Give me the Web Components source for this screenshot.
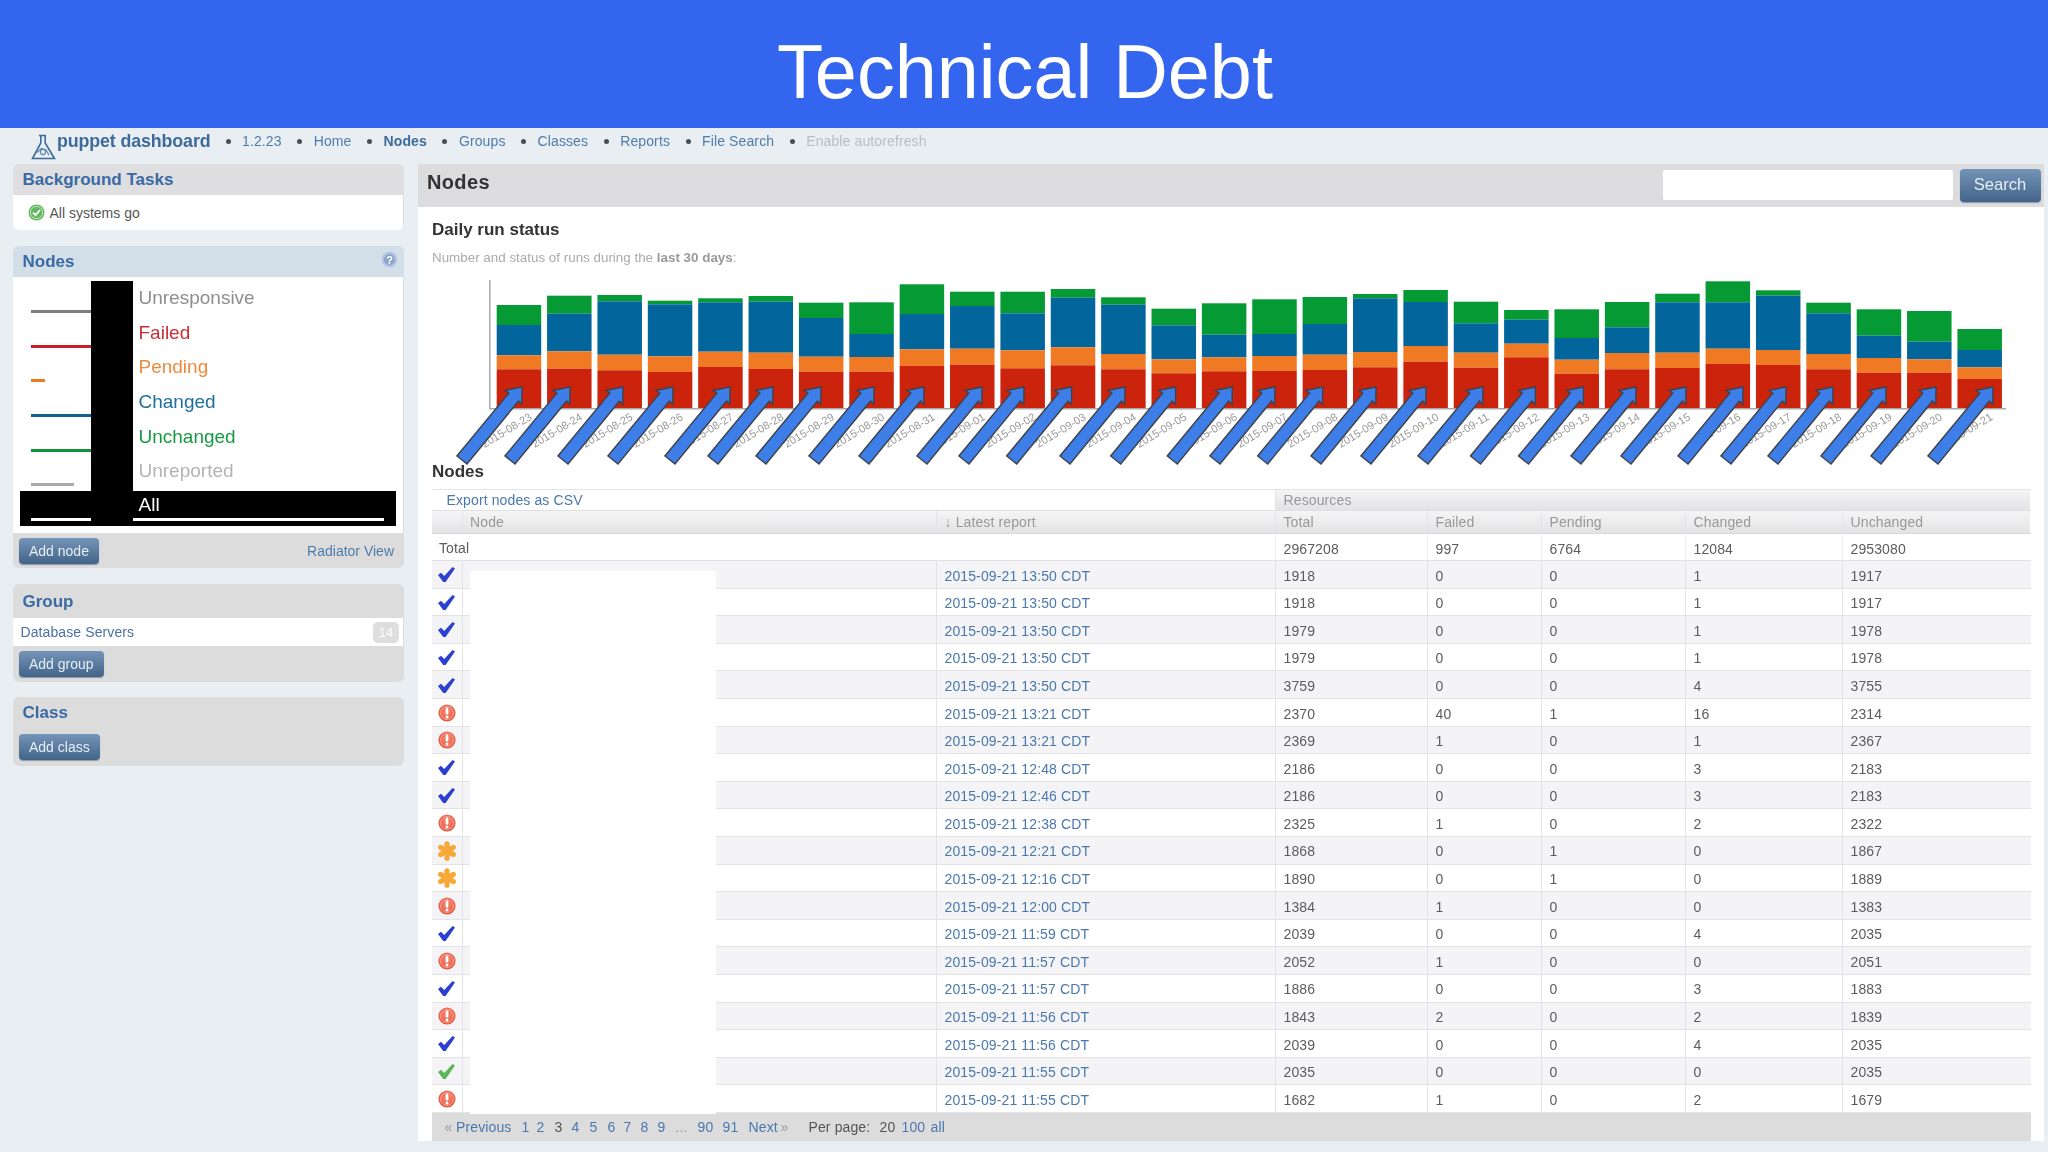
<!DOCTYPE html>
<html lang="en">
<head>
<meta charset="utf-8">
<title>Technical Debt</title>
<style>
html,body{margin:0;padding:0;width:2048px;height:1152px;overflow:hidden;background:#e8eef1;font-family:"Liberation Sans",Arial,sans-serif;}
</style>
</head>
<body>
<slide-title>Technical Debt</slide-title>
<pd-app></pd-app>
<script>
function def(name, css, html, init){
  customElements.define(name, class extends HTMLElement{
    constructor(){super();const r=this.attachShadow({mode:'open'});
      r.innerHTML='<style>'+css+'</style>'+(typeof html==='function'?html(this):html);}
    connectedCallback(){if(init&&!this._i){this._i=1;init(this,this.shadowRoot);}}
  });
}

def('slide-title',`:host{display:flex;align-items:center;justify-content:center;height:128px;background:#3465ee;color:#fff;font-size:75.6px;font-family:"Liberation Sans",Arial,sans-serif;padding-left:2px;box-sizing:border-box;padding-top:16px}`,`<slot></slot>`);

def('status-icon',`:host{display:inline-flex;width:20px;height:20px;align-items:center;justify-content:center}svg{display:block}`,'',(h,r)=>{
  const k=h.getAttribute('kind');let s='';
  const chk=c=>`<svg width="19" height="17" viewBox="0 0 19 16"><path d="M1 8.4 L4 6.2 L7.2 9.4 L15.6 .6 L18 2 L8.6 15.4 L6.2 15.4 Z" fill="${c}"/></svg>`;
  if(k==='ok')s=chk('#2b40cf');
  if(k==='unchanged')s=chk('#5cb557');
  if(k==='fail')s=`<svg width="18" height="18" viewBox="0 0 18 18"><defs><radialGradient id="f" cx=".5" cy=".4" r=".6"><stop offset="0" stop-color="#f58b74"/><stop offset="1" stop-color="#e4553f"/></radialGradient></defs><circle cx="9" cy="9" r="8.6" fill="url(#f)"/><circle cx="9" cy="9" r="6.4" fill="none" stroke="#f6b3a3" stroke-width=".8"/><rect x="7.7" y="3.6" width="2.6" height="7" rx="1.2" fill="#fff"/><circle cx="9" cy="13" r="1.5" fill="#fff"/></svg>`;
  if(k==='pending')s=`<svg width="20" height="20" viewBox="0 0 20 20"><g stroke="#f7a837" stroke-width="5.2" stroke-linecap="round"><path d="M10 2.8V17.2"/><path d="M3.7 6.4L16.3 13.6"/><path d="M16.3 6.4L3.7 13.6"/></g></svg>`;
  r.innerHTML+=s;
});

def('pd-button',`:host{display:inline-flex;align-items:center;justify-content:center;height:var(--h,26px);padding:0 var(--px,10.5px);border-radius:4px;background:linear-gradient(#7495b8,#426488);color:#e6edf4;font-size:var(--fs,14px);box-shadow:0 1px 1px #8a97a5;box-sizing:border-box}`,`<slot></slot>`);

def('pd-nav',`:host{display:flex;align-items:center;height:36px;padding-left:31px;font-size:14px;color:#4f7cab;box-sizing:border-box;letter-spacing:.12px}
svg{flex:none;width:25px;height:26px;margin-top:1px}
.brand{font-weight:700;font-size:17.8px;color:#3f6a9c;margin-left:1px;width:153px;white-space:nowrap;letter-spacing:-.1px;margin-top:-9px}
span.i{display:flex;align-items:center;margin-top:-10px}
span.i::before{content:"";width:5px;height:5px;border-radius:50%;background:#444f5a;margin:0 11.5px 0 15.5px;flex:none}
.b{font-weight:700;color:#3f6a9c}.off{color:#b7bec3}`,
`<svg viewBox="0 0 25 26" fill="none" stroke="#3f6a9c" stroke-width="1.6"><path d="M8 1.5H15M9.8 1.5V9L1.5 24.5H23.5L14.2 9V1.5"/><path d="M6 18.5L10.5 14.5 15 16 18 21" stroke-width="1.2" stroke="#5d86b0"/><circle cx="12" cy="18" r="2.6" stroke-width="1.1" stroke="#5d86b0"/></svg>
<span class="brand">puppet dashboard</span>
<span class="i">1.2.23</span><span class="i">Home</span><span class="i b">Nodes</span><span class="i">Groups</span><span class="i">Classes</span><span class="i">Reports</span><span class="i">File Search</span><span class="i off">Enable autorefresh</span>`);

def('pd-panel',`:host{display:block;background:#dcdcdc;border-radius:6px;width:391.5px;overflow:hidden}
.h{display:flex;align-items:center;justify-content:space-between;height:var(--head,31px);padding:var(--hp,0) 7px 0 10px;font-size:17px;font-weight:700;color:#3a6aa3;box-sizing:border-box}
:host([tone=blue]) .h{background:#d3dfe8}
:host([tone=soft]) .h{background:#dfdfe1}`,
h=>`<div class="h"><span>${h.getAttribute('heading')}</span><slot name="tool"></slot></div><slot></slot>`);

def('panel-body',`:host{display:flex;align-items:center;background:#fff;height:var(--bh,35px);box-sizing:border-box;font-size:14px;color:#555;padding:0 5px 0 8px;margin-right:1px;}`,`<slot></slot>`);
def('panel-foot',`:host{display:flex;align-items:flex-start;justify-content:space-between;padding:5px 10px 0 6px;height:var(--fh,35px);box-sizing:border-box;font-size:14px;line-height:26px;color:#4f7cab}`,`<slot></slot>`);

def('help-icon',`:host{display:flex;width:15px;height:15px;border-radius:50%;background:#8ba6cc;color:#fff;font-size:11px;font-weight:700;align-items:center;justify-content:center;margin-top:-4px;box-shadow:inset 0 0 0 2px #b3c6df}`,`?`);
def('go-icon',`:host{display:block;width:17px;height:17px;margin:0 5px 0 7px}`,`<svg width="17" height="17" viewBox="0 0 17 17"><circle cx="8.5" cy="8.5" r="8" fill="#62b862"/><circle cx="8.5" cy="8.5" r="6.2" fill="none" stroke="#c6e6c2" stroke-width="1"/><path d="M5 8.6L7.6 11.2 12 6" fill="none" stroke="#fff" stroke-width="1.9"/></svg>`);

def('legend-row',`:host{display:block;position:relative;height:34.7px;padding-left:11px;box-sizing:border-box;font-size:19px;color:var(--c)}
.t{display:flex;align-items:center;height:34px;margin-left:107px;padding-left:.5px}
.l{position:absolute;left:11px;top:29px;height:3px;background:var(--l,var(--c));width:var(--w)}
:host([all]){background:#000;height:35px;margin-top:2px;--c:#fff}
:host([all]) .t{height:28px}
:host([all]) .l{top:26.5px}`,`<div class="t"><slot></slot></div><div class="l"></div>`);

def('pd-legend',`:host{display:block;position:relative;padding:4px 7px 7px 7.5px;background:#fff;margin-right:1px;height:256px;box-sizing:border-box}
.mask{position:absolute;left:78px;top:4px;width:42px;height:245px;background:#000}`,`<slot></slot><div class="mask"></div>`);

def('pd-chart',`:host{display:block;height:192px}svg{display:block;overflow:visible}text{font-family:"Liberation Sans",Arial,sans-serif}`,'',(h,r)=>{
  const d=[[305,325,355.3,369.3],[295.7,313.7,351.3,368.7],[295,301.3,354.7,370.3],[300.7,304.3,356.3,372],[298.3,302.3,351.7,367],[296,301.7,352.7,369],[302.7,318,356.7,371.7],[302.3,334,357,371.7],[284.3,314,349.3,366],[291.7,306,348.7,364.7],[291.7,313.3,350.3,368.3],[289,297.7,347.3,365.3],[297.3,304.7,354,369.3],[308.7,325.3,359.3,373.3],[303.3,334.7,357.3,371.3],[299.3,334,356,371],[297,324,354.7,370],[294,298.3,352,367.3],[290,302,346,361.7],[301.7,323.3,352.7,367.7],[310,319.7,343.7,357.3],[309.3,338,359.7,373.7],[302,327.3,353,369.3],[293.7,302.3,352.7,368],[281.3,302.3,348.7,364],[290.3,295.7,350,365],[302.7,313.3,354,369.3],[309.3,335.7,358,372.7],[311,341.7,359.3,372.7],[329,350,367.3,379]];
  const tips=[522,570,623,673,730,773,821,874,924,982,1024,1071.7,1125,1175.7,1232.3,1275,1322.7,1376,1426,1483,1535.5,1583.5,1636,1686,1743,1786,1833,1886,1936,1993];
  const days=[];for(let i=23;i<=31;i++)days.push('2015-08-'+i);for(let i=1;i<=21;i++)days.push('2015-09-'+String(i).padStart(2,'0'));
  const col=['#069a35','#02659c','#f07a24','#cc230c'],B=408.3;let s='';
  d.forEach((b,i)=>{const x=496.7+i*50.37;
    b.forEach((y,j)=>{const n=j<3?b[j+1]:B;s+=`<rect x="${x.toFixed(2)}" y="${y}" width="44.5" height="${(n-y).toFixed(2)}" fill="${col[j]}"/>`;});
  });
  s+=`<path d="M489.8 280V408.8H2006" fill="none" stroke="#a9a9a9" stroke-width="1.5"/>`;
  d.forEach((b,i)=>{const x=496.7+i*50.37+22+14;
    s+=`<text x="${x.toFixed(1)}" y="419" font-size="11" fill="#999" text-anchor="end" transform="rotate(-31 ${x.toFixed(1)} 419)">${days[i]}</text>`;});
  tips.forEach(t=>{
    s+=`<polygon transform="translate(${t} 387)" points="0,0 -.2,17.4 -3.6,14.2 -55,77 -65,69 -13.2,6.2 -17,3.4" fill="#3d7ee9" stroke="#40444c" stroke-width="1.5" stroke-linejoin="miter"/>`;});
  r.innerHTML+=`<svg width="1600" height="192" viewBox="432 270 1600 192">${s}</svg>`;
});

const ROWS=`ok,13:50,1918,0,0,1,1917
ok,13:50,1918,0,0,1,1917
ok,13:50,1979,0,0,1,1978,m
ok,13:50,1979,0,0,1,1978,m
ok,13:50,3759,0,0,4,3755
fail,13:21,2370,40,1,16,2314
fail,13:21,2369,1,0,1,2367
ok,12:48,2186,0,0,3,2183
ok,12:46,2186,0,0,3,2183
fail,12:38,2325,1,0,2,2322,m
pending,12:21,1868,0,1,0,1867
pending,12:16,1890,0,1,0,1889
fail,12:00,1384,1,0,0,1383
ok,11:59,2039,0,0,4,2035
fail,11:57,2052,1,0,0,2051,m
ok,11:57,1886,0,0,3,1883
fail,11:56,1843,2,0,2,1839
ok,11:56,2039,0,0,4,2035,m
unchanged,11:55,2035,0,0,0,2035,m
fail,11:55,1682,1,0,2,1679,m`.split('\n').map(l=>l.split(','));

def('pd-table',`:host{display:block;position:relative;font-size:14px;color:#5c5c5c;letter-spacing:.12px;border-top:1px solid #e4e4e6;box-sizing:border-box;height:652px}
.r{display:grid;grid-template-columns:29.5px 474.5px 339px 152px 114px 144px 157px 188px;box-sizing:border-box}
.r>div{display:flex;align-items:center;padding-left:7.5px;border-left:1px solid #e3e3ea;box-sizing:border-box;min-width:0;white-space:nowrap}
.r>div:first-child{border-left:0;padding:0;justify-content:center}
.top{height:21px;grid-template-columns:843px 755px;border-bottom:1px solid #e0e0e2}
.top>div:first-child{justify-content:flex-start;padding-left:14.5px}
.top a{color:#4a78ad}
.head{height:23px;border-bottom:1px solid #dadadc}
.head>div,.g{background:linear-gradient(#f5f5f6,#e3e3e5);color:#999}
.top>div.g{color:#999}
.total{height:27px;border-bottom:1.5px solid #e2e2e5}
.total>div{border-left-color:#eee;padding-top:3px}
.total>div:first-child{justify-content:flex-start;padding:2px 0 0 7px;grid-column:span 3}
.row{height:27.6px;border-bottom:1.5px solid #e3e3e6;background:#fff}
.row:nth-child(odd){background:#f4f4f6}
.row a{color:#4a78ad}
.row>div{position:relative;padding-top:2.5px}
.row>div:first-child{padding-top:1px}
.m{position:absolute;left:7px;top:11px;width:1.5px;height:6px;background:#555}
.mask{position:absolute;left:37.5px;top:81px;width:246px;height:543px;background:#fff}
.pg{height:28px;background:#dcdcdc;display:flex;align-items:center;color:#555;padding-left:12.5px;font-size:14px;position:relative}
.pg span{position:absolute;top:50%;transform:translateY(-50%);white-space:nowrap}
.pg .l{color:#4a78ad}.pg .q{color:#999}`,
()=>{
  const cell=t=>`<div>${t}</div>`;
  const rows=ROWS.map(c=>`<div class="r row"><div><status-icon kind="${c[0]}"></status-icon></div><div>${c[7]?'<i class="m"></i>':''}</div><div><a>2015-09-21 ${c[1]} CDT</a></div>${c.slice(2,7).map(cell).join('')}</div>`).join('');
  const P=[[522,'1',1],[537,'2',1],[555,'3',0],[572,'4',1],[590,'5',1],[608,'6',1],[624,'7',1],[641,'8',1],[658,'9',1],[676,'...',2],[698,'90',1],[723,'91',1],[880,'20',0],[902,'100',1],[931,'all',1],[809,'Per page:',0]];
  const pg=P.map(p=>`<span class="${p[2]==1?'l':p[2]==2?'q':''}" style="left:${p[0]-432.5}px">${p[1]}</span>`).join('');
  return `<div class="wrap"><div class="r top"><div><a>Export nodes as CSV</a></div><div class="g">Resources</div></div>
  <div class="r head"><div></div><div>Node</div><div>↓ Latest report</div><div>Total</div><div>Failed</div><div>Pending</div><div>Changed</div><div>Unchanged</div></div>
  <div class="r total"><div>Total</div><div>2967208</div><div>997</div><div>6764</div><div>12084</div><div>2953080</div></div>
  <div class="rows">${rows}</div>
  <div class="pg"><span class="q" style="left:12.5px">«</span><span class="l" style="left:24px">Previous</span>${pg}<span class="l" style="left:${749-432.5}px">Next</span><span class="q" style="left:${781-432.5}px">»</span></div></div>
  <div class="mask"></div>`;
});

def('pd-main',`:host{display:block;flex:none;width:1626px;height:977px;background:#fff;margin-left:18px;font-size:14px}
.top{display:flex;align-items:center;justify-content:space-between;height:43px;background:#dcdcde;padding:0 3.5px 0 9px;box-sizing:border-box}
h1{margin:0;font-size:20px;letter-spacing:.35px;color:#333;font-weight:700;margin-top:-6px}
.s{display:flex;align-items:center;gap:6.5px;margin-top:-1px}
.in{width:290px;height:30px;background:#fff;border-radius:2px}
pd-button{--h:33px;--fs:16.6px;--px:14px;width:81px}
.b{padding:0 13px 0 14px}
h3{margin:13px 0 0;font-size:17px;height:20px;line-height:20px;color:#333}
p{margin:10px 0 0;height:16px;line-height:16px;color:#aaa;font-size:13.4px}
p b{color:#999}
h4{margin:0 0 7px;font-size:17px;height:20px;line-height:20px;color:#333}`,
`<div class="top"><h1>Nodes</h1><div class="s"><div class="in"></div><pd-button>Search</pd-button></div></div>
<div class="b"><h3>Daily run status</h3><p>Number and status of runs during the <b>last 30 days</b>:</p><div style="height:4px"></div><pd-chart></pd-chart><h4>Nodes</h4><pd-table></pd-table></div>`);

def('pd-side',`:host{display:flex;flex-direction:column;gap:16px;flex:none;width:400px;padding-left:12.5px;box-sizing:border-box}
a{color:#4f7cab}
.badge{display:flex;align-items:center;justify-content:center;width:26px;height:21px;border-radius:5px;background:#dedede;color:#fff;font-size:13px;margin-left:auto;margin-right:-1px}
.dbs{color:#4a70a5;font-size:14px;letter-spacing:.1px}`,
`<pd-panel heading="Background Tasks" tone="soft"><panel-body><go-icon></go-icon>All systems go</panel-body></pd-panel>
<pd-panel heading="Nodes" tone="blue"><help-icon slot="tool"></help-icon>
 <pd-legend>
  <legend-row style="--c:#8e8e8e;--l:#7d7d7d;--w:100px">Unresponsive</legend-row>
  <legend-row style="--c:#c92f35;--l:#c8202a;--w:100px">Failed</legend-row>
  <legend-row style="--c:#ee8a3c;--l:#ee7b20;--w:14px">Pending</legend-row>
  <legend-row style="--c:#1d6f9e;--l:#0f648f;--w:100px">Changed</legend-row>
  <legend-row style="--c:#189a43;--l:#119438;--w:100px">Unchanged</legend-row>
  <legend-row style="--c:#b4b4b4;--l:#a9a9a9;--w:43px">Unreported</legend-row>
  <legend-row all style="--w:353px">All</legend-row>
 </pd-legend>
 <panel-foot><pd-button>Add node</pd-button><a>Radiator View</a></panel-foot></pd-panel>
<pd-panel heading="Group" style="--head:34px;--hp:2px"><panel-body style="--bh:28px"><span class="dbs">Database Servers</span><span class="badge">14</span></panel-body>
 <panel-foot style="--fh:36px"><pd-button>Add group</pd-button></panel-foot></pd-panel>
<pd-panel heading="Class" style="--head:32px;margin-top:-1px"><panel-foot style="--fh:37px"><pd-button>Add class</pd-button></panel-foot></pd-panel>`);

def('pd-app',`:host{display:block;height:1024px;filter:blur(.45px)}
.l{display:flex;margin-top:0}`,`<pd-nav></pd-nav><div class="l"><pd-side></pd-side><pd-main></pd-main></div>`);
</script>
</body>
</html>
